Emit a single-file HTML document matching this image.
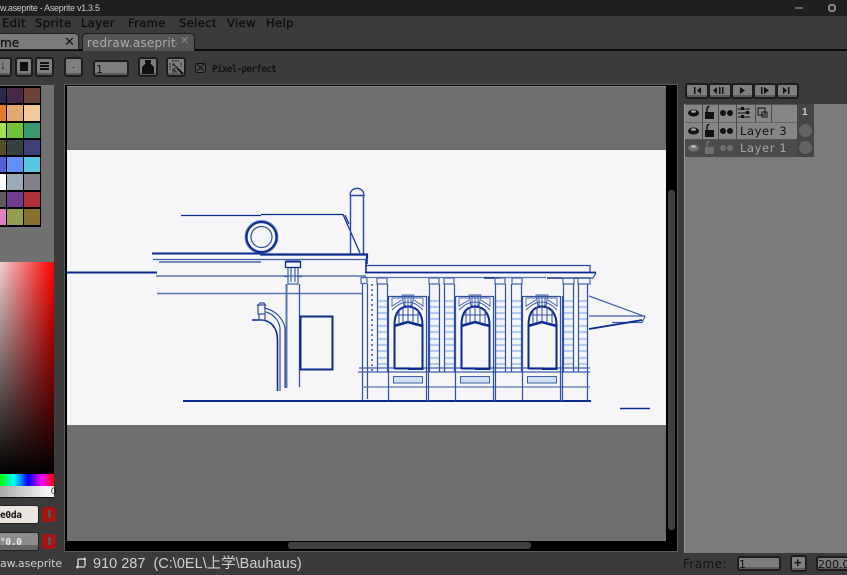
<!DOCTYPE html>
<html><head><meta charset="utf-8"><style>
html,body{margin:0;padding:0;background:#3b3b3b}
#r{position:relative;width:847px;height:575px;overflow:hidden;background:#3b3b3b;font-family:"Liberation Sans","Noto Sans CJK SC",sans-serif}
#r div{position:absolute;box-sizing:border-box}
.t{white-space:nowrap;line-height:1}
.m{color:#0e0e0e;top:18px;letter-spacing:.4px;font-family:"DejaVu Sans",sans-serif;font-size:11.5px;-webkit-text-stroke:.35px #0e0e0e}
.b{background:#7f7f7f;border:2px solid #1d1d1d;border-radius:3px;box-shadow:inset 0 -2px 0 #5c5c5c}
</style></head><body><div id="r">
<div style="left:0;top:0;width:847px;height:16px;background:#1f1f1f"></div>
<div class="t" style="left:0;top:4px;font-size:9px;letter-spacing:-.3px;color:#c9c9c9">w.aseprite - Aseprite v1.3.5</div>
<div style="left:795px;top:7px;width:8px;height:2px;background:#666"></div>
<div style="left:828px;top:4px;width:8px;height:8px;border:2px solid #888;border-radius:3px;background:#222"></div>
<div class="t m" style="left:2px">Edit</div><div class="t m" style="left:35px">Sprite</div><div class="t m" style="left:81px">Layer</div><div class="t m" style="left:128px">Frame</div><div class="t m" style="left:179px">Select</div><div class="t m" style="left:227px">View</div><div class="t m" style="left:266px">Help</div>
<div style="left:0;top:49px;width:847px;height:2px;background:#0c0c0c"></div>
<div style="left:-5px;top:33px;width:84px;height:17px;background:#7b7b7b;border:1px solid #222;border-radius:0 4px 0 0"></div>
<div class="t" style="left:0;top:36px;font:12px 'DejaVu Sans',sans-serif;color:#111;-webkit-text-stroke:.3px #111">me</div>
<div class="t" style="left:64px;top:35px;font-size:13px;color:#111">✕</div>
<div style="left:82px;top:33px;width:113px;height:18px;background:#545454;border:1px solid #1c1c1c;border-bottom:0;border-radius:4px 4px 0 0"></div>
<div class="t" style="left:87px;top:36px;font:12px 'DejaVu Sans',sans-serif;letter-spacing:.2px;color:#aaa;width:90px;overflow:hidden">redraw.aseprite</div>
<div class="t" style="left:180px;top:36px;font-size:11px;color:#888">✕</div>

<div class="b" style="left:-8px;top:57px;width:20px;height:20px"></div><div class="t" style="left:0;top:59px;font-size:12px;color:#111">↓</div>
<div class="b" style="left:15px;top:57px;width:18px;height:20px"></div><div style="left:20px;top:62px;width:8px;height:9px;background:#111"></div>
<div class="b" style="left:35px;top:57px;width:19px;height:20px"></div><div style="left:40px;top:62px;width:9px;height:2px;background:#111;box-shadow:0 3px 0 #111,0 6px 0 #111"></div>
<div class="b" style="left:64px;top:57px;width:19px;height:20px"></div><div style="left:73px;top:67px;width:1px;height:1px;background:#111"></div>
<div class="b" style="left:93px;top:60px;width:36px;height:17px;background:#7d7d7d"></div><div class="t" style="left:96px;top:63px;font:11px 'DejaVu Sans',sans-serif;color:#111">1</div>
<div class="b" style="left:138px;top:57px;width:20px;height:20px"></div>
<svg style="position:absolute;left:140px;top:59px" width="16" height="16"><path d="M5 1h6v3h-1l4 4v7H2V8l4-4H5z" fill="#111"/></svg>
<div class="b" style="left:166px;top:57px;width:20px;height:20px"></div>
<svg style="position:absolute;left:169px;top:60px" width="15" height="15"><path d="M3 1h7M1 3v7M3 12h5M12 3v4M4 4h2v2H4zM7 7h2v2H7zM4 9h2v2H4z" stroke="#111" fill="none" stroke-dasharray="2 1"/><path d="M9 9l5 5" stroke="#111" stroke-width="2"/></svg>
<svg style="position:absolute;left:195px;top:62px" width="12" height="12"><rect x=".5" y="1.500" width="10" height="9" rx="2" fill="#4a4a4a" stroke="#111"/><path d="M2 2l7 7M9 2L2 9" stroke="#111"/></svg>
<div class="t" style="left:212px;top:64px;font:bold 9.5px 'DejaVu Sans Mono',monospace;letter-spacing:-.8px;color:#141414">Pixel-perfect</div>

<!-- left column -->
<div style="left:0;top:85px;width:54px;height:177px;background:#717171"></div>
<div style="left:0;top:86px;width:41px;height:141px;background:#000"></div>
<svg style="position:absolute;left:0;top:86px" width="41" height="140">
<g><rect x="0" y="2" width="6" height="15" fill="#28284a"/><rect x="7" y="2" width="16" height="15" fill="#48294a"/><rect x="24" y="2" width="16" height="15" fill="#6a4236"/>
<rect x="0" y="19" width="6" height="16" fill="#e27a28"/><rect x="7" y="19" width="16" height="16" fill="#dfa96f"/><rect x="24" y="19" width="16" height="16" fill="#f1c99b"/>
<rect x="0" y="37" width="6" height="15" fill="#a2e152"/><rect x="7" y="37" width="16" height="15" fill="#70c038"/><rect x="24" y="37" width="16" height="15" fill="#389870"/>
<rect x="0" y="54" width="6" height="15" fill="#524d28"/><rect x="7" y="54" width="16" height="15" fill="#364040"/><rect x="24" y="54" width="16" height="15" fill="#3f3f78"/>
<rect x="0" y="71" width="6" height="15" fill="#5060d8"/><rect x="7" y="71" width="16" height="15" fill="#6090f8"/><rect x="24" y="71" width="16" height="15" fill="#58c8e0"/>
<rect x="0" y="88" width="6" height="16" fill="#fff"/><rect x="7" y="88" width="16" height="16" fill="#9bacb8"/><rect x="24" y="88" width="16" height="16" fill="#84808a"/>
<rect x="0" y="106" width="6" height="15" fill="#605c5c"/><rect x="7" y="106" width="16" height="15" fill="#703c90"/><rect x="24" y="106" width="16" height="15" fill="#b03038"/>
<rect x="0" y="123" width="6" height="16" fill="#e080c0"/><rect x="7" y="123" width="16" height="16" fill="#90a050"/><rect x="24" y="123" width="16" height="16" fill="#887030"/></g>
</svg>
<div style="left:0;top:262px;width:54px;height:212px;background:linear-gradient(to bottom,rgba(0,0,0,0),#000),linear-gradient(to right,#f0d0d0,#f00)"></div>
<div style="left:0;top:474px;width:54px;height:12px;background:linear-gradient(to right,#0f0,#0ff 26%,#00f 52%,#f0f 78%,#f00)"></div>
<div style="left:0;top:486px;width:54px;height:12px;background:linear-gradient(to right,#aaa,#fff);border-bottom:1px solid #111"></div>
<div class="t" style="left:51px;top:487px;font-size:9px;color:#111">0</div>
<div style="left:-5px;top:505px;width:44px;height:19px;background:#ebe5e0;border:1px solid #222;border-radius:3px"></div>
<div class="t" style="left:0;top:510px;font:bold 9.5px 'DejaVu Sans Mono',monospace;letter-spacing:-.3px;color:#111">e0da</div>
<div style="left:42px;top:507px;width:14px;height:15px;background:#a81414;border-radius:3px"></div>
<div style="left:48px;top:510px;width:3px;height:8px;background:#555"></div>
<div style="left:-5px;top:532px;width:44px;height:19px;background:linear-gradient(to bottom,#8c8c8c 70%,#666 70%);border:1px solid #222;border-radius:3px"></div>
<div class="t" style="left:0;top:537px;font:bold 9.5px 'DejaVu Sans Mono',monospace;letter-spacing:-.3px;color:#eee">°0.0</div>
<div style="left:42px;top:534px;width:14px;height:15px;background:#a81414;border-radius:3px"></div>
<div style="left:48px;top:537px;width:3px;height:8px;background:#555"></div>

<!-- editor -->
<div style="left:64px;top:84px;width:614px;height:468px;background:#000;border:1px solid #5a5a5a"></div>
<div style="left:67px;top:86px;width:599px;height:455px;background:#6e6e6e;border-top:1px solid #8a8a8a"></div>
<div style="left:668px;top:190px;width:7px;height:340px;background:#3f3f3f;border-radius:3px"></div>
<div style="left:288px;top:542px;width:243px;height:7px;background:#3f3f3f;border-radius:3px"></div>
<svg style="position:absolute;left:67px;top:150px" width="599" height="275" viewBox="67 150 599 275">
<rect x="67" y="150" width="599" height="275" fill="#f6f6f8"/>
<defs>
<g id="w" fill="none">
<path d="M388.500 296V401M426.500 296V401M428.500 296V401M389 296.500H427" stroke="#2f4f9f" stroke-width="1.200"/>
<path d="M392 298H423M392 298V307M423 298V307" stroke="#5a78b8"/>
<path d="M402 295h12l-2 11h-8zM405 295v11M408 295v11M411 295v11M392 306l10-6M423 306l-9-6M392 310q16-16 31 0" stroke="#3f5fa8"/>
<path d="M394.500 369V325C394.500 316 397 307 408 306.500C419 307 422.500 316 422.500 325V369H409V368.500H394.500" stroke="#0a2a8e" stroke-width="2"/>
<path d="M394 326l7-2 7-2 7 2 8 2" stroke="#0a2a8e" stroke-width="2.500"/>
<path d="M399 309v14M403 307v16M408 306v16M413 307v16M418 309v14M395 315h27" stroke="#2f4f9f"/>
<rect x="393.500" y="376.500" width="29" height="6.500" fill="#cfe0f5" stroke="#3f60a8"/>
</g>
<g id="s" stroke="#b4caee" stroke-width="2.200">
<path d="M0 301h10M0 307h10M0 313h10M0 319h10M0 326h10M0 332h10M0 339h10M0 345h10M0 351h10M0 358h10M0 364h10"/>
</g>
</defs>
<use href="#s" x="377"/><use href="#s" x="429"/><use href="#s" x="444"/><use href="#s" x="495"/><use href="#s" x="511"/><use href="#s" x="563"/><use href="#s" x="578"/>
<g fill="none" stroke="#0a2a8e" stroke-width="1.200">
<path d="M181 215.500H261M261 214.500H343L360 253M345 215L349 224" />
<path d="M350.500 254V195M363.500 254V195M350 195.500C350 186 364 186 364 195.500H350" stroke="#2a489c" stroke-width="1.400"/>
<circle cx="261.500" cy="237" r="15" stroke-width="2.200"/><circle cx="261.500" cy="237" r="16.500" stroke="#5a78b8" stroke-width=".8"/><circle cx="261.500" cy="237" r="10.500" stroke="#2f4f9f"/>
<path d="M152 253.500H260" stroke-width="2"/><path d="M260 254.500H367V259" stroke-width="2.200"/>
<path d="M153 259.500H366" stroke="#3f5fa8"/><path d="M159 262H261" stroke="#2a489c"/>
<path d="M156 276H366M157 293.500H362" stroke="#5a74b0" stroke-width="1.400"/><path d="M67 272.500H157" stroke-width="2"/>
<path d="M285.500 261.500H300.500V267.500H285.500Z" stroke-width="1.300"/><path d="M286 261.500H300" stroke-width="2"/><path d="M288 268V284H298V268M291 268V282M295 268V282M284 276.500H288V284M302 276.500H298V284" stroke="#3f5fa8"/>
<path d="M286.500 284V388" stroke="#5a74b0" stroke-width="2"/><path d="M299.500 284V387" stroke="#2f4f9f"/>
<rect x="300.500" y="316.500" width="32" height="53" stroke-width="2"/>
<path d="M252 320H261C270 320 277.500 327 277.500 340V391" stroke-width="1.600"/><path d="M264 308C275 310 283 318 285 328V388M266 312C273 314 279 320 280 328V391" stroke="#2f4f9f"/>
<path d="M258 305h7v9h-7zM257 306l3-3 4 0 2 3M259 314h6v6h-6z" stroke="#2f4f9f"/>
<path d="M183 401H591" stroke-width="2"/><path d="M620 408.500H650" stroke-width="1.600"/>
<path d="M365 265.500H590V272" stroke="#2a489c"/><path d="M365 272.500H596" stroke-width="1.800"/><path d="M596 273L593 278H589" stroke="#2a489c"/>
<path d="M366 259V273M367 255V264" stroke-width="1.500"/>
<path d="M362 277.500H546" stroke="#5a74b0"/><path d="M484 278H500M547 278H590" stroke-width="1.400"/>
<path d="M361 277.500h6v6h-6zM377 278h10v6h-10zM429 278h10v6h-10zM444 278h10v6h-10zM495 278h10v6h-10zM512 278h10v6h-10zM563 278h11v6h-11zM578 278h12v6h-12z" stroke="#4a68b0"/>
<path d="M362.500 284V400M377.500 284V372M387.500 284V372M429.500 284V372M439.500 284V372M444.500 284V372M454.500 284V372M495.500 284V372M505.500 284V372M511.500 284V372M521.500 284V372M563.500 284V372M573.500 284V372M578.500 284V372" stroke="#2f4f9f"/>
<path d="M367.500 284V399" stroke="#2f4f9f"/><path d="M372 284V372" stroke="#0a2a8e" stroke-dasharray="2 3"/><path d="M587.500 284V401" stroke="#2a489c"/>
<path d="M359 368H590M358 372H590" stroke="#3f5fa8"/><path d="M362 387H590" stroke="#5a74b0"/>
<path d="M589 296L645 316.500L642 322.500H612M589 316H645" stroke="#3f5fa8"/><path d="M589 329L625 323L642 320" stroke-width="1.800"/>
</g>
<use href="#w"/><use href="#w" x="67"/><use href="#w" x="134"/>
</svg>

<!-- right -->
<div style="left:684px;top:104px;width:163px;height:449px;background:#7b7b7b;border-left:1px solid #9a9a9a"></div>
<div class="b" style="left:685px;top:83px;width:24px;height:16px"></div>
<div class="b" style="left:708px;top:83px;width:24px;height:16px"></div>
<div class="b" style="left:731px;top:83px;width:23px;height:16px"></div>
<div class="b" style="left:753px;top:83px;width:24px;height:16px"></div>
<div class="b" style="left:776px;top:83px;width:23px;height:16px"></div>
<svg style="position:absolute;left:685px;top:83px" width="114" height="16" fill="#111">
<path d="M9 4h1.500v7H9zM16 4v7l-4-3.500z"/><path d="M32 4v7l-4-3.500zM34 4h1.500v7H34zM37 4h1.500v7H37z" />
<path d="M55 4l5 3.500-5 3.500z"/><path d="M76 4h1.500v7H76zM79 4l5 3.500-5 3.500z"/><path d="M98 4l4 3.500-4 3.500zM103 4h1.500v7H103z"/>
</svg>

<div style="left:685px;top:104px;width:129px;height:18px;background:#868686;border-top:1px solid #555"></div>
<div style="left:685px;top:122px;width:129px;height:17px;background:#868686;border-top:1px solid #666"></div>
<div style="left:685px;top:139px;width:129px;height:18px;background:#4b4b4b;border-top:1px solid #555"></div>
<div style="left:797px;top:104px;width:17px;height:53px;background:#454545"></div>
<div class="t" style="left:802px;top:108px;font-size:10px;color:#ccc;font-weight:bold">1</div>
<div style="left:799px;top:124px;width:13px;height:13px;border-radius:50%;background:#646464"></div>
<div style="left:799px;top:141px;width:13px;height:13px;border-radius:50%;background:#646464"></div>
<div style="left:702px;top:104px;width:1px;height:53px;background:#4a4a4a"></div>
<div style="left:718px;top:104px;width:1px;height:53px;background:#4a4a4a"></div>
<div style="left:736px;top:104px;width:1px;height:53px;background:#4a4a4a"></div>
<div style="left:755px;top:104px;width:1px;height:18px;background:#4a4a4a"></div>
<div style="left:771px;top:104px;width:1px;height:18px;background:#4a4a4a"></div>
<svg style="position:absolute;left:685px;top:104px" width="90" height="53">
<defs><g id="e"><ellipse cx="8.500" cy="9" rx="5.500" ry="3.500" fill="currentColor"/><ellipse cx="8.500" cy="7.500" rx="2.500" ry="1.300" fill="#ccc" opacity=".8"/></g><g id="l"><path d="M22 8V5q0-2.500 2.500-2.500" stroke="currentColor" stroke-width="1.500" fill="none"/><rect x="20" y="8" width="9" height="7" fill="currentColor"/></g><g id="d"><circle cx="38" cy="9" r="3" fill="currentColor"/><circle cx="45" cy="9" r="3" fill="currentColor"/></g></defs>
<g color="#111"><use href="#e"/><use href="#l"/><use href="#d"/></g>
<g color="#111" transform="translate(0,18)"><use href="#e"/><use href="#l"/><use href="#d"/></g>
<g color="#707070" transform="translate(0,35)"><use href="#e"/><use href="#l"/><use href="#d"/></g>
<path d="M53 5h12M53 9h12M53 13h12" stroke="#111"/><rect x="56" y="3" width="3" height="3" fill="#111"/><rect x="61" y="7" width="3" height="3" fill="#111"/><rect x="56" y="11" width="3" height="3" fill="#111"/>
<path d="M73 4h7v7h-7zM77 8h5v5h-5z" stroke="#111" fill="none"/>
</svg>
<div class="t" style="left:740px;top:124px;font:11.500px 'DejaVu Sans',sans-serif;letter-spacing:.6px;color:#111">Layer 3</div>
<div class="t" style="left:740px;top:141px;font:11.500px 'DejaVu Sans',sans-serif;letter-spacing:.6px;color:#a8a8a8">Layer 1</div>

<!-- status -->
<div class="t" style="left:0;top:557px;font:11px 'DejaVu Sans',sans-serif;color:#d0d0d0;letter-spacing:-.1px">aw.aseprite</div>
<svg style="position:absolute;left:75px;top:557px" width="13" height="13"><path d="M3 2h7v7M1 10h9M3 2v8" stroke="#ddd" fill="none" stroke-width="1.300"/><path d="M10 0l-2 3h3zM1 10l2-2v4z" fill="#ddd"/></svg>
<div class="t" style="left:93px;top:557px;font-size:14.500px;color:#cfcfcf">910 287&nbsp; (C:\0EL\上学\Bauhaus)</div>
<div class="t" style="left:683px;top:557px;font:12px 'DejaVu Sans',sans-serif;letter-spacing:.4px;color:#151515">Frame:</div>
<div class="b" style="left:737px;top:556px;width:44px;height:15px;background:#7d7d7d"></div><div class="t" style="left:739px;top:558px;font:11px 'DejaVu Sans',sans-serif;color:#111">1</div>
<div class="b" style="left:790px;top:555px;width:17px;height:17px"></div><div class="t" style="left:794px;top:556px;font-size:13px;font-weight:bold;color:#111">+</div>
<div class="b" style="left:816px;top:556px;width:40px;height:15px;background:#7d7d7d"></div><div class="t" style="left:818px;top:558px;font:11px 'DejaVu Sans',sans-serif;color:#111">200.0</div>
</div></body></html>
